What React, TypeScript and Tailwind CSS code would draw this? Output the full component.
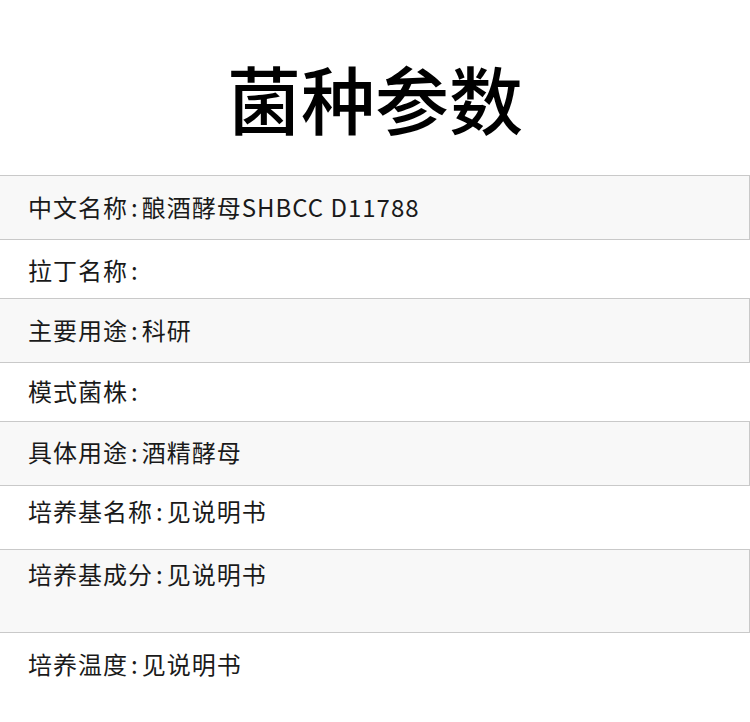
import React from "react";

type Row = { label: string; value: string; gray: boolean; h: string; pt: string };

const rows: Row[] = [
  { label: "中文名称", value: "酿酒酵母SHBCC D11788", gray: true, h: "h-[65px]", pt: "pt-[19px]" },
  { label: "拉丁名称", value: "", gray: false, h: "h-[58px]", pt: "pt-[18px]" },
  { label: "主要用途", value: "科研", gray: true, h: "h-[65px]", pt: "pt-[19px]" },
  { label: "模式菌株", value: "", gray: false, h: "h-[58px]", pt: "pt-[16px]" },
  { label: "具体用途", value: "酒精酵母", gray: true, h: "h-[65px]", pt: "pt-[18px]" },
  { label: "培养基名称", value: "见说明书", gray: false, h: "h-[63px]", pt: "pt-[13px]" },
  { label: "培养基成分", value: "见说明书", gray: true, h: "h-[84px]", pt: "pt-[12px]" },
  { label: "培养温度", value: "见说明书", gray: false, h: "h-[89px]", pt: "pt-[19px]" },
];

export default function App() {
  return (
    <div
      className="w-[750px] h-[722px] overflow-hidden bg-white text-[#1a1a1a]"
      style={{ fontFamily: '"Noto Sans CJK SC", "Noto Sans", sans-serif' }}
    >
      <div className="pt-[60px] h-[175px]">
        <h1 className="text-center text-[74px] leading-[74px] font-medium text-black">
          菌种参数
        </h1>
      </div>
      <div className="flex flex-col">
        {rows.map((r, i) => (
          <div
            key={i}
            className={
              r.gray
                ? `${r.h} ${r.pt} box-border bg-[#f8f8f8] border-y border-r border-[#c9c9c9] pl-[28px]`
                : `${r.h} ${r.pt} box-border bg-white pl-[28px]`
            }
          >
            <p className="text-[24px] leading-[24px] tracking-[1px] whitespace-nowrap">
              {r.label}
              <span className="px-[3px]">:</span>
              {r.value}
            </p>
          </div>
        ))}
      </div>
    </div>
  );
}
